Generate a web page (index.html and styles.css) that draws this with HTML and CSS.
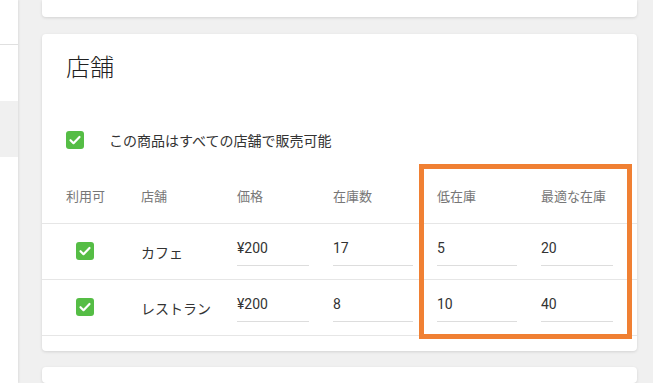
FILE: index.html
```html
<!DOCTYPE html>
<html lang="ja">
<head>
  <meta charset="UTF-8">
  <title>店舗</title>
  <meta name="viewport" content="width=device-width, initial-scale=1.0">
  <link rel="stylesheet" href="styles.css">
</head>
<body>

  <div class="sidebar">
    <div class="side-top"></div>
    <div class="side-active"></div>
  </div>

  <div class="main">
    <div class="card card-prev"></div>

    <div class="card card-stores">
      <h2 class="card-title">店舗</h2>

      <label class="all-stores">
        <span class="check"><svg viewBox="0 0 18 18"><path d="M4.5 9.2l3 3 6-6.2" /></svg></span>
        <span>この商品はすべての店舗で販売可能</span>
      </label>

      <div class="table">
        <div class="tr th">
          <div class="cell">利用可</div>
          <div class="cell">店舗</div>
          <div class="cell">価格</div>
          <div class="cell">在庫数</div>
          <div class="cell">低在庫</div>
          <div class="cell">最適な在庫</div>
        </div>
        <div class="tr">
          <div class="cell"><span class="check row-check"><svg viewBox="0 0 18 18"><path d="M4.5 9.2l3 3 6-6.2" /></svg></span></div>
          <div class="cell name">カフェ</div>
          <div class="cell"><div class="field w72">¥200</div></div>
          <div class="cell"><div class="field w80">17</div></div>
          <div class="cell"><div class="field w80">5</div></div>
          <div class="cell"><div class="field w72">20</div></div>
        </div>
        <div class="tr">
          <div class="cell"><span class="check row-check"><svg viewBox="0 0 18 18"><path d="M4.5 9.2l3 3 6-6.2" /></svg></span></div>
          <div class="cell name">レストラン</div>
          <div class="cell"><div class="field w72">¥200</div></div>
          <div class="cell"><div class="field w80">8</div></div>
          <div class="cell"><div class="field w80">10</div></div>
          <div class="cell"><div class="field w72">40</div></div>
        </div>
      </div>

      <!-- highlight around stock columns -->
      <div class="highlight"></div>
    </div>

    <div class="card card-next"></div>
  </div>

</body>
</html>
```

FILE: styles.css
```css
* {
  margin: 0;
  padding: 0;
  box-sizing: border-box;
}

body, html {
  height: 100%;
  overflow: hidden;
}

body {
  display: flex;
  background: #f0f0f0;
  font-family: Roboto, "Noto Sans CJK JP", sans-serif;
  color: #333;
}

.sidebar {
  width: 18px;
  flex-shrink: 0;
  background: #fff;
  box-shadow: 1px 0 2px rgba(0,0,0,0.08);
  position: relative;
  z-index: 1;
}

.side-top {
  height: 45px;
  border-bottom: 1px solid #e0e0e0;
}

.side-active {
  margin-top: 56px;
  height: 56px;
  background: #f0f0f0;
}

.main {
  flex: 1;
  padding: 0 16px 0 24px;
  display: flex;
  flex-direction: column;
}

.card {
  background: #fff;
  border-radius: 4px;
  box-shadow: 0 1px 3px rgba(0,0,0,0.12);
  flex-shrink: 0;
}

.card-prev {
  height: 17px;
  border-radius: 0 0 4px 4px;
}

.card-stores {
  position: relative;
  margin-top: 17px;
  padding: 18px 0 15px;
}

.card-next {
  margin-top: 16px;
  height: 16px;
}

.card-title {
  padding: 0 24px;
  font-size: 24px;
  line-height: 32px;
  font-weight: 300;
  color: #212121;
}

.all-stores {
  display: flex;
  align-items: center;
  gap: 25px;
  height: 36px;
  margin-top: 38px;
  padding: 0 24px;
  font-size: 14px;
  color: #333;
}

.check {
  width: 18px;
  height: 18px;
  border-radius: 3px;
  background: #55bd45;
  display: inline-flex;
  flex-shrink: 0;
}

.check svg {
  width: 18px;
  height: 18px;
}

.check path {
  fill: none;
  stroke: #fff;
  stroke-width: 2.2;
  stroke-linecap: round;
  stroke-linejoin: round;
}

.table {
  margin-top: 10px;
}

.tr {
  display: grid;
  grid-template-columns: 99px 96px 96px 104px 104px 96px;
  height: 56px;
  border-bottom: 1px solid #e6e6e6;
  align-items: center;
  font-size: 14px;
}

.tr .cell:first-child {
  padding-left: 24px;
}

.th {
  font-size: 13px;
  color: #777;
}

.row-check {
  margin-left: 10px;
  margin-top: 2px;
}

.name {
  color: #333;
  padding-top: 1px;
}

.field {
  height: 30px;
  line-height: 24px;
  padding-bottom: 5px;
  border-bottom: 1px solid #ddd;
  color: #333;
  margin-top: -2px;
}

.w72 { width: 72px; }
.w80 { width: 80px; }

.highlight {
  position: absolute;
  left: 377px;
  top: 130px;
  width: 213px;
  height: 175px;
  border: 5px solid #f08033;
  pointer-events: none;
}
```
